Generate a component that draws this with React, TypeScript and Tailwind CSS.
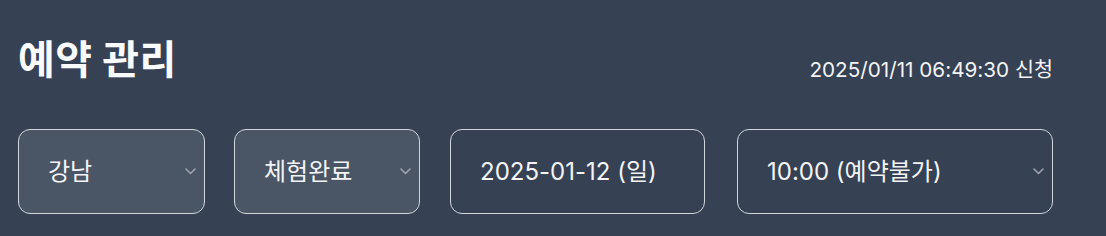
import React from "react";

const font = { fontFamily: "Inter, 'Noto Sans CJK KR', sans-serif" };

function Chevron() {
  return (
    <svg width="11" height="7" viewBox="0 0 11 7" fill="none" className="shrink-0">
      <path d="M1 1l4.5 4.5L10 1" stroke="#9ca3af" strokeWidth="1.6" strokeLinecap="round" strokeLinejoin="round" />
    </svg>
  );
}

function SelectBox({ label, className }: { label: string; className: string }) {
  return (
    <div
      className={`h-[85px] rounded-xl border border-gray-300 flex items-center justify-between pl-[29px] pr-[8px] ${className}`}
    >
      <span className="text-[24px] leading-none text-gray-100">{label}</span>
      <Chevron />
    </div>
  );
}

export default function App() {
  return (
    <div className="w-[1106px] h-[236px] bg-gray-700 pl-[18px] pr-[53px] pt-[40px]" style={font}>
      {/* HEADER */}
      <div className="flex items-start justify-between h-[40px]">
        <h1 className="text-[40px] leading-[40px] font-bold text-gray-50 tracking-[0.01em]">예약 관리</h1>
        <p className="text-[20.7px] leading-none text-gray-100 mt-[20px]">2025/01/11 06:49:30 신청</p>
      </div>

      {/* FILTERS */}
      <div className="flex mt-[49px]">
        <SelectBox label="강남" className="w-[187px] bg-gray-600" />
        <SelectBox label="체험완료" className="w-[186px] ml-[29px] bg-gray-600" />
        <div className="w-[255px] ml-[30px] h-[85px] rounded-xl border border-gray-300 flex items-center pl-[29px]">
          <span className="text-[24px] leading-none text-gray-100">2025-01-12 (일)</span>
        </div>
        <SelectBox label="10:00 (예약불가)" className="w-[316px] ml-[32px]" />
      </div>
    </div>
  );
}
